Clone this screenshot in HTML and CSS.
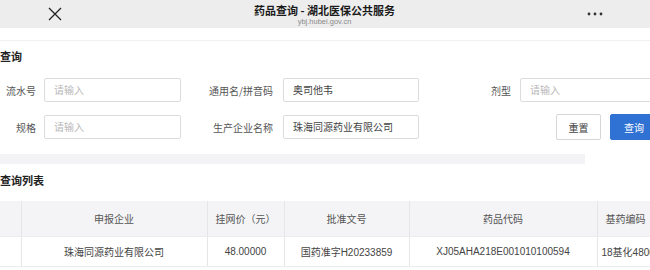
FILE: index.html
```html
<!DOCTYPE html>
<html lang="zh-CN">
<head>
<meta charset="utf-8">
<title>药品查询 - 湖北医保公共服务</title>
<link rel="stylesheet" href="styles.css">
</head>
<body>
<header class="topbar">
  <span class="close">
    <svg width="14" height="14" viewBox="0 0 14 14"><path d="M1 1 L13 13 M13 1 L1 13" stroke="#222" stroke-width="1.3" fill="none"/></svg>
  </span>
  <div class="titles">
    <div class="title">药品查询 - 湖北医保公共服务</div>
    <div class="subtitle">ybj.hubei.gov.cn</div>
  </div>
  <span class="more">
    <svg width="16" height="4" viewBox="0 0 16 4"><circle cx="2" cy="2" r="1.4" fill="#333"/><circle cx="8" cy="2" r="1.4" fill="#333"/><circle cx="14" cy="2" r="1.4" fill="#333"/></svg>
  </span>
</header>
<div class="strip"></div>

<section class="query">
  <h2 class="heading">查询</h2>
  <div class="form-row">
    <label class="lbl lbl-1">流水号</label>
    <div class="input in-1 placeholder">请输入</div>
    <label class="lbl lbl-2">通用名/拼音码</label>
    <div class="input in-2">奥司他韦</div>
    <label class="lbl lbl-3">剂型</label>
    <div class="input in-3 placeholder">请输入</div>
  </div>
  <div class="form-row">
    <label class="lbl lbl-1">规格</label>
    <div class="input in-1 placeholder">请输入</div>
    <label class="lbl lbl-2">生产企业名称</label>
    <div class="input in-2">珠海同源药业有限公司</div>
    <div class="buttons">
      <button class="btn btn-reset">重置</button>
      <button class="btn btn-primary">查询</button>
    </div>
  </div>
</section>

<div class="band"></div>

<section class="list">
  <h2 class="heading">查询列表</h2>
  <table class="grid">
    <colgroup>
      <col class="c0"><col class="c1"><col class="c2"><col class="c3"><col class="c4"><col class="c5">
    </colgroup>
    <thead>
      <tr><th></th><th>申报企业</th><th>挂网价（元）</th><th>批准文号</th><th>药品代码</th><th class="last">基药编码</th></tr>
    </thead>
    <tbody>
      <tr><td></td><td>珠海同源药业有限公司</td><td>48.00000</td><td>国药准字H20233859</td><td>XJ05AHA218E001010100594</td><td class="last">18基化48000001</td></tr>
    </tbody>
  </table>
</section>
</body>
</html>
```

FILE: styles.css
```css
* { box-sizing: border-box; }
html, body {
  margin: 0;
  padding: 0;
  width: 650px;
  height: 270px;
  overflow: hidden;
  background: #fff;
  font-family: "Liberation Sans", "Noto Sans CJK SC", sans-serif;
  color: #333;
}

.topbar {
  height: 28px;
  background: #ededed;
  display: flex;
  align-items: center;
}
.close {
  width: 14px;
  height: 14px;
  margin-left: 48px;
  display: flex;
}
.titles {
  flex: 1;
  text-align: center;
  padding-top: 1px;
}
.title {
  font-size: 11px;
  line-height: 13px;
  font-weight: 700;
  color: #1a1a1a;
  font-family: "Noto Sans CJK SC", sans-serif;
}
.subtitle {
  font-size: 7.5px;
  line-height: 9px;
  color: #8a8a8a;
}
.more {
  width: 16px;
  display: flex;
  margin-right: 47px;
}

.strip {
  height: 13px;
  border-bottom: 1px solid #f1f1f1;
}

.heading {
  margin: 0;
  font-size: 11px;
  line-height: 16px;
  font-weight: 700;
  color: #222;
  font-family: "Noto Sans CJK SC", sans-serif;
}
.query .heading { padding-top: 7px; }

.form-row {
  display: flex;
  align-items: center;
  height: 26px;
}
.form-row > * { flex-shrink: 0; }
.query .form-row:first-of-type { margin-top: 13px; }
.form-row + .form-row { margin-top: 11px; }

.lbl {
  font-size: 10px;
  color: #555;
  text-align: right;
  font-family: "Noto Sans CJK SC", sans-serif;
  white-space: nowrap;
}
.lbl-1 { width: 36px; margin-right: 8px; }
.lbl-2 { width: 92px; margin-right: 10px; }
.lbl-3 { width: 92px; margin-right: 9px; }

.input {
  height: 24px;
  border: 1px solid #dcdcdc;
  border-radius: 2px;
  font-size: 10px;
  line-height: 22px;
  padding-left: 9px;
  color: #444;
  font-family: "Noto Sans CJK SC", sans-serif;
  white-space: nowrap;
}
.input.placeholder { color: #b8b8b8; }
.in-1 { width: 137px; }
.in-2 { width: 136px; }
.in-3 { width: 150px; }

.buttons {
  display: flex;
  margin-left: 137px;
  gap: 9px;
}
.btn {
  height: 26px;
  width: 45px;
  border-radius: 2px;
  font-size: 10px;
  font-family: "Noto Sans CJK SC", sans-serif;
  padding: 0;
  cursor: pointer;
}
.btn-reset {
  background: #fff;
  border: 1px solid #d6d6d6;
  color: #444;
}
.btn-primary {
  background: #2f72d4;
  border: 1px solid #2f72d4;
  color: #fff;
  width: 48px;
}

.band {
  width: 585px;
  height: 10px;
  margin-top: 14px;
  background: #f3f3f5;
}

.list .heading { padding-top: 8px; }

.grid {
  margin-top: 13px;
  border-collapse: collapse;
  table-layout: fixed;
  width: 720px;
  font-family: "Liberation Sans", "Noto Sans CJK SC", sans-serif;
  font-size: 10px;
}
.c0 { width: 21px; }
.c1 { width: 186px; }
.c2 { width: 77px; }
.c3 { width: 125px; }
.c4 { width: 188px; }
.c5 { width: 123px; }

.grid th, .grid td {
  border-right: 1px solid #e6e6e6;
  text-align: center;
  white-space: nowrap;
  overflow: hidden;
  padding: 0;
  color: #444;
}
.grid th {
  height: 35px;
  background: #f4f4f6;
  font-weight: 400;
  color: #555;
  border-bottom: 1px solid #ececec;
}
.grid td {
  height: 30px;
  border-bottom: 1px solid #ececec;
}
.grid th.last { text-align: left; padding-left: 8px; }
.grid td.last { text-align: left; padding-left: 4px; }
```
